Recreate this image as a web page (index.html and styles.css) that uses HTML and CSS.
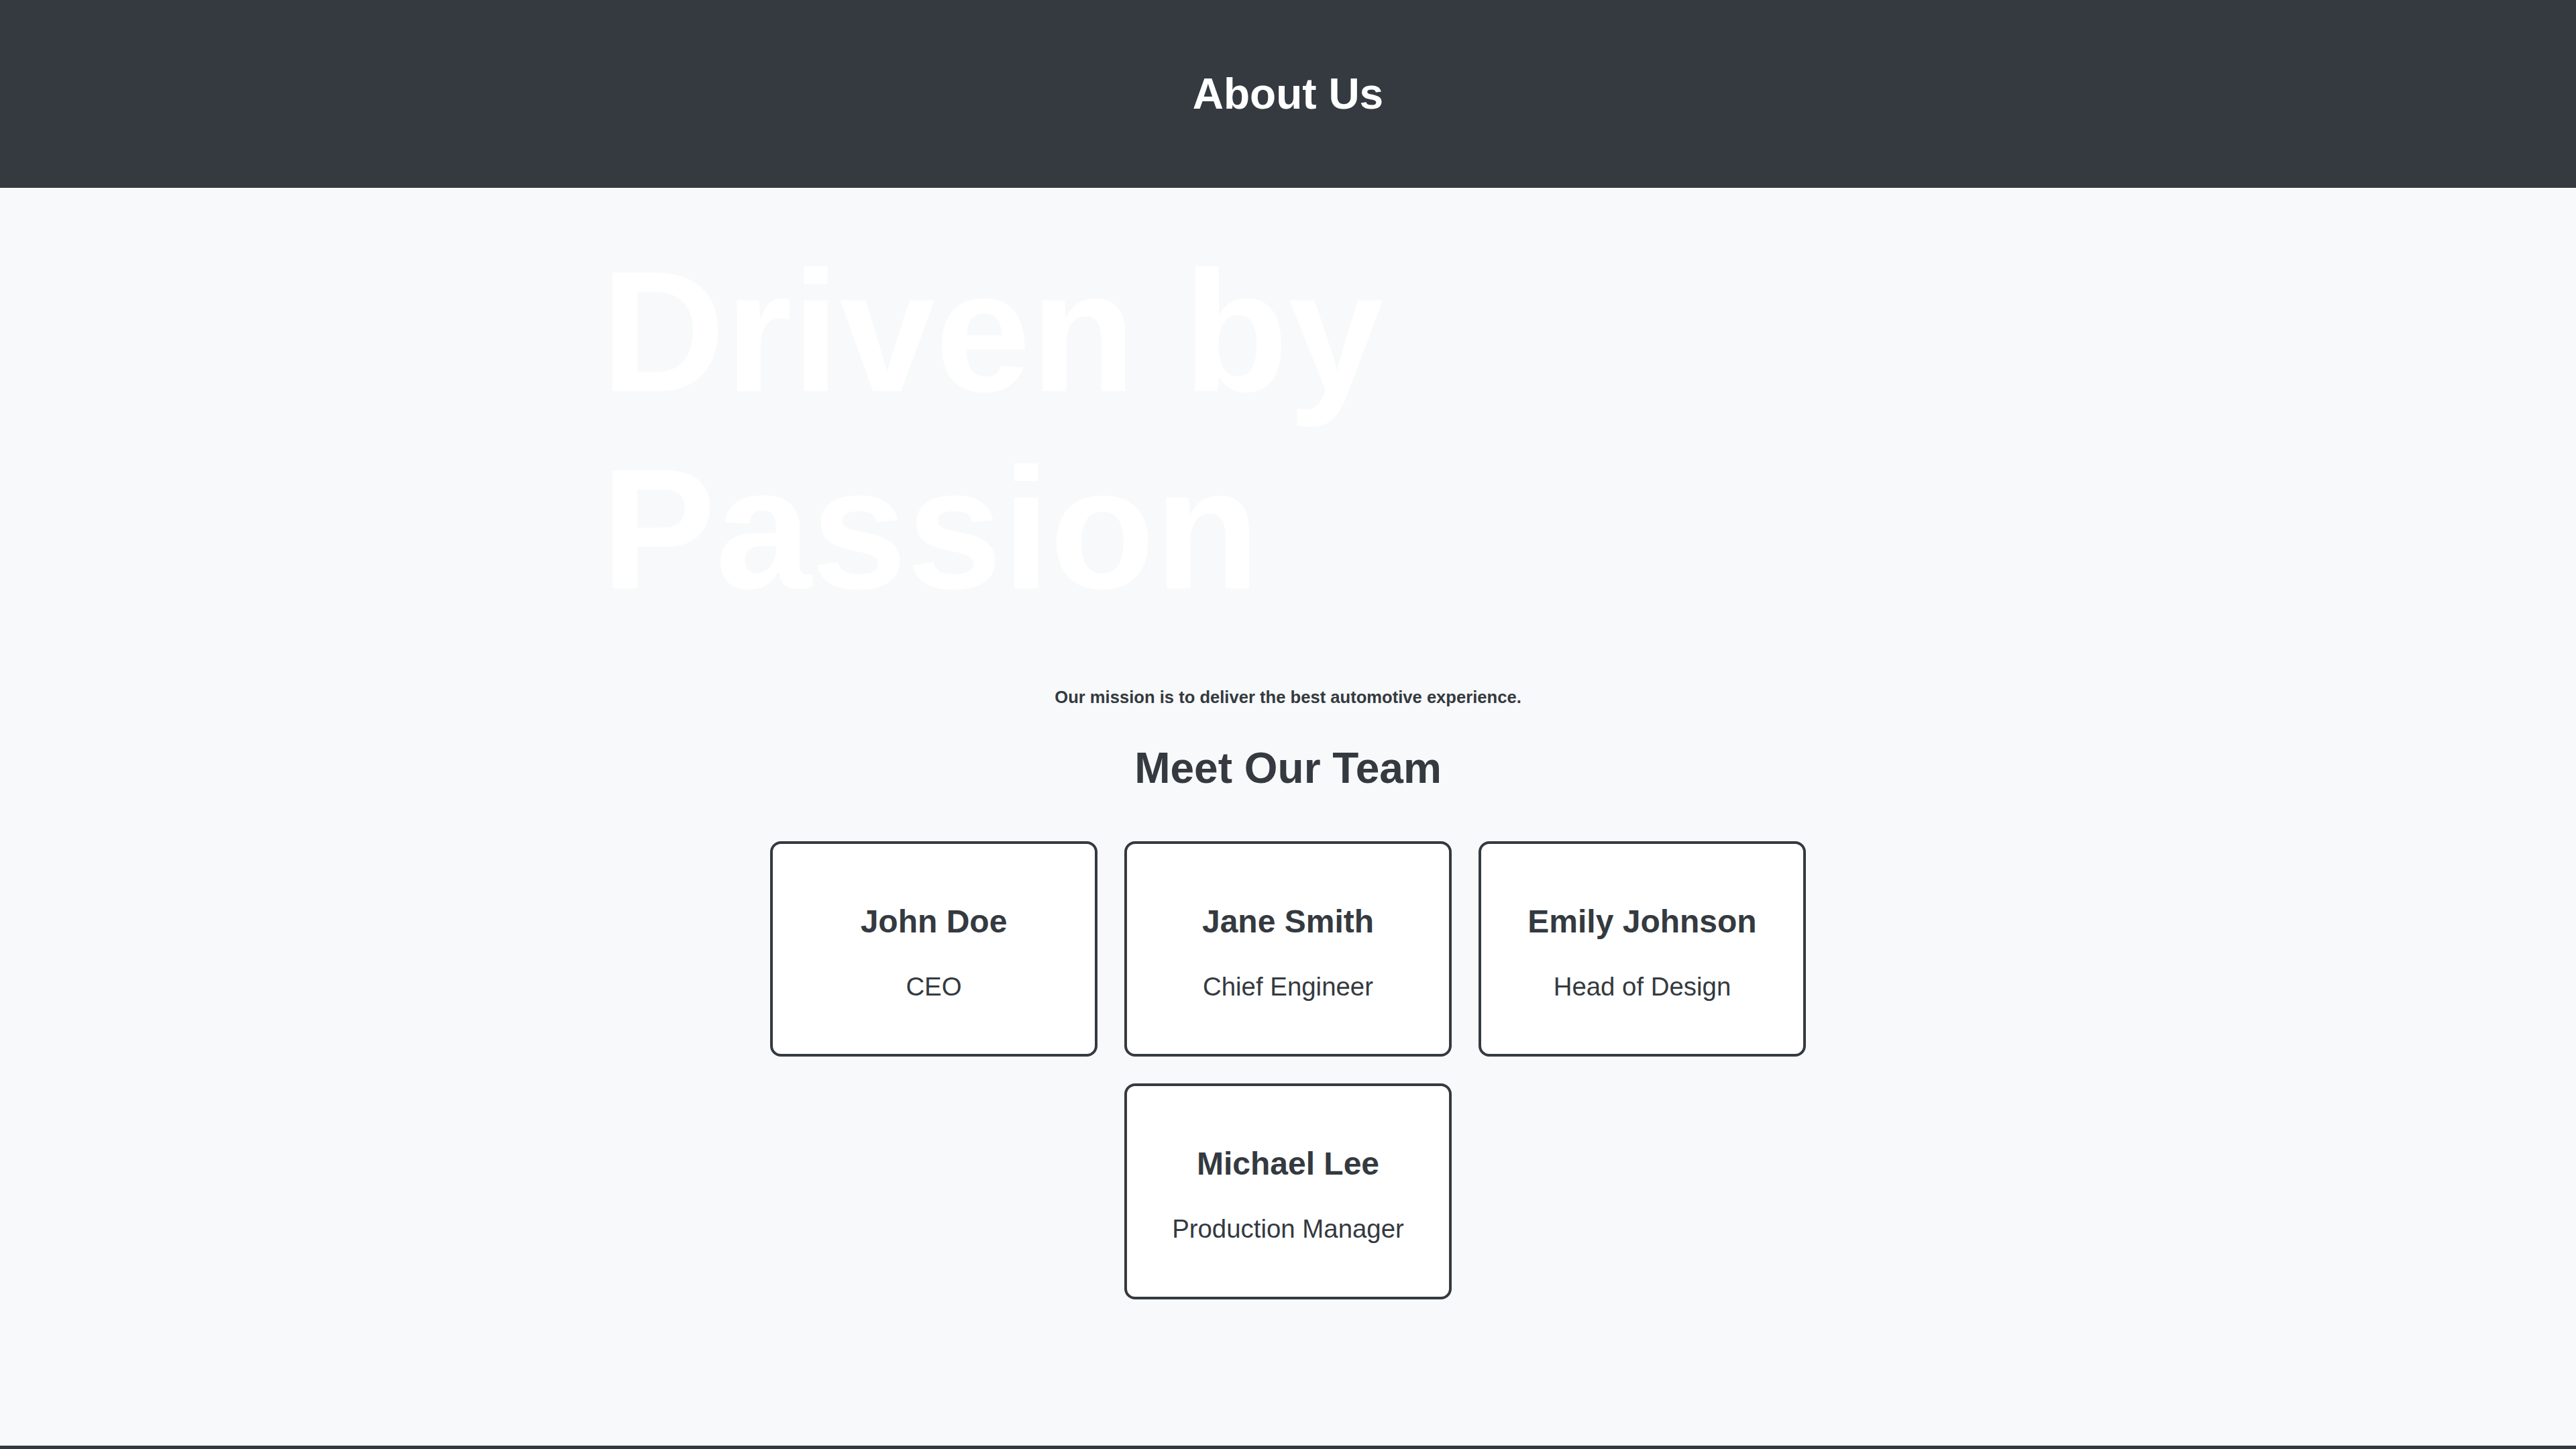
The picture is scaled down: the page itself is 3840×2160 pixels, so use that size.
FILE: index.html
```html
<!DOCTYPE html>
<html lang="en">
<head>
<meta charset="utf-8">
<title>About Us</title>
<link rel="stylesheet" href="styles.css">
</head>
<body>
<header class="site-header">
  <h1 class="site-title">About Us</h1>
</header>
<main class="content">
  <section class="hero">
    <h1 class="hero-title">Driven by Passion</h1>
  </section>
  <p class="mission">Our mission is to deliver the best automotive experience.</p>
  <section class="team">
    <h2 class="team-title">Meet Our Team</h2>
    <div class="team-grid">
      <div class="card">
        <h3 class="card-name">John Doe</h3>
        <p class="card-role">CEO</p>
      </div>
      <div class="card">
        <h3 class="card-name">Jane Smith</h3>
        <p class="card-role">Chief Engineer</p>
      </div>
      <div class="card">
        <h3 class="card-name">Emily Johnson</h3>
        <p class="card-role">Head of Design</p>
      </div>
      <div class="card">
        <h3 class="card-name">Michael Lee</h3>
        <p class="card-role">Production Manager</p>
      </div>
    </div>
  </section>
</main>
<footer class="site-footer"></footer>
</body>
</html>
```

FILE: styles.css
```css
html, body {
  margin: 0;
  padding: 0;
}

body {
  background: #f8f9fa;
  color: #343a40;
  font-family: "Liberation Sans", Arial, sans-serif;
  font-size: 32px;
}

.site-header {
  background: #343a40;
  height: 280px;
  display: flex;
  align-items: center;
  justify-content: center;
}

.site-title {
  margin: 0;
  color: #ffffff;
  font-size: 64px;
  font-weight: 700;
  line-height: normal;
}

.content {
  max-width: 2048px;
  margin: 0 auto;
  padding-top: 67px;
  padding-bottom: 198px;
}

.hero-title {
  margin: 0;
  color: #ffffff;
  font-size: 256px;
  font-weight: 700;
  line-height: normal;
  text-align: left;
}

.mission {
  margin: 90px 0 0;
  text-align: center;
  font-size: 25.6px;
  font-weight: 700;
  line-height: normal;
}

.team-title {
  margin: 54px 0 52px;
  text-align: center;
  font-size: 64px;
  font-weight: 700;
  line-height: normal;
}

.team-grid {
  display: flex;
  flex-wrap: wrap;
  justify-content: center;
}

.card {
  width: 400px;
  margin: 20px;
  padding: 40px;
  background: #ffffff;
  border: 4px solid #343a40;
  border-radius: 16px;
  text-align: center;
}

.card-name {
  margin: 48px 0;
  font-size: 48px;
  font-weight: 700;
  line-height: normal;
}

.card-role {
  margin: 38.4px 0;
  font-size: 38.4px;
  font-weight: 400;
  line-height: normal;
}

.site-footer {
  background: #343a40;
  height: 120px;
}
```
